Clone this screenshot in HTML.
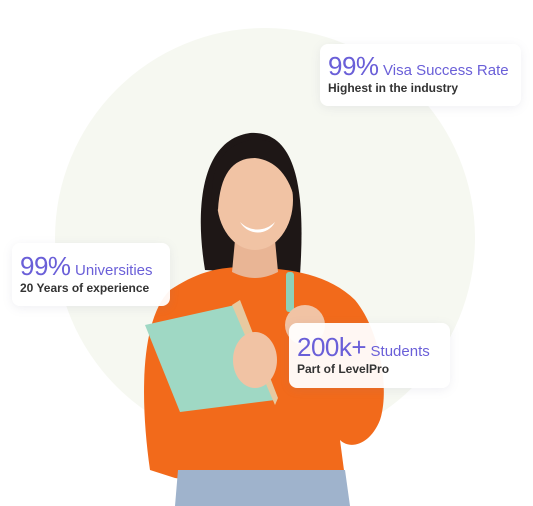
<!DOCTYPE html>
<html><head><style>
body{margin:0;width:533px;height:506px;overflow:hidden;background:#fff;font-family:"Liberation Sans",sans-serif;position:relative}
.card{position:absolute;background:rgba(255,255,255,.95);border-radius:8px;box-shadow:0 2px 10px rgba(120,120,160,.12);padding:0 0 0 8px;box-sizing:border-box}
.t{color:#6a5fd8;white-space:nowrap}
.t b{font-size:26px;font-weight:normal;letter-spacing:-0.5px}
.t span{font-size:15px}
.s{color:#333;font-size:12px;font-weight:bold;white-space:nowrap;margin-top:-1px}
</style></head><body>
<svg width="533" height="506" style="position:absolute;left:0;top:0">
<circle cx="265" cy="238" r="210" fill="#f6f8f1"/>
<path d="M205 270 C195 210 200 140 250 133 C300 130 305 200 300 275 Z" fill="#1e1716"/>
<path d="M150 470 C140 400 140 320 170 290 C200 270 225 265 255 268 C290 268 330 275 355 300 C380 330 390 390 380 420 C370 445 350 450 340 440 L345 478 C290 485 220 485 175 478 Z" fill="#f26a1b"/>
<path d="M178 470 L345 470 L350 506 L175 506 Z" fill="#9fb3cc"/>
<path d="M235 240 L275 240 L278 272 C262 280 248 280 232 272 Z" fill="#e9b595"/>
<ellipse cx="255" cy="200" rx="38" ry="50" fill="#f1c3a4"/>
<path d="M212 200 C210 150 240 138 262 140 C285 142 300 165 296 205 C290 175 275 160 255 158 C232 158 220 175 218 210 Z" fill="#1e1716"/>
<path d="M240 222 C250 232 265 232 275 222 C268 236 248 236 240 222 Z" fill="#fff"/>
<path d="M145 325 L235 305 L275 400 L180 412 Z" fill="#9fd8c4"/>
<path d="M232 305 L240 300 L278 398 L275 405 Z" fill="#e7c9a0"/>
<ellipse cx="255" cy="360" rx="22" ry="28" fill="#f1c3a4"/>
<rect x="286" y="272" width="8" height="40" rx="3" fill="#8ed1b8"/>
<ellipse cx="305" cy="325" rx="20" ry="20" fill="#f1c3a4"/>
</svg>
<div class="card" style="left:320px;top:44px;width:201px;height:62px;padding-top:7px"><div class="t"><b>99%</b> <span>Visa Success Rate</span></div><div class="s">Highest in the industry</div></div>
<div class="card" style="left:12px;top:243px;width:158px;height:63px;padding-top:8px"><div class="t"><b>99%</b> <span>Universities</span></div><div class="s">20 Years of experience</div></div>
<div class="card" style="left:289px;top:323px;width:161px;height:65px;padding-top:9px"><div class="t"><b>200k+</b> <span>Students</span></div><div class="s">Part of LevelPro</div></div>
</body></html>
